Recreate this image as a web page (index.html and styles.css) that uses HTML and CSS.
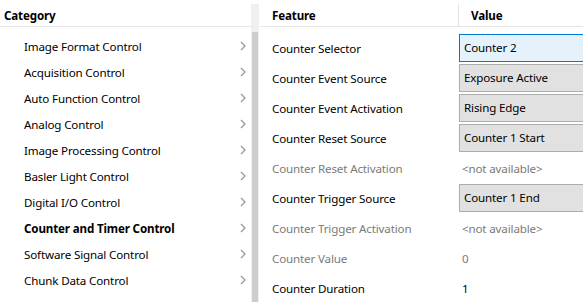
FILE: index.html
```html
<!DOCTYPE html>
<html lang="en">
<head>
    <meta charset="UTF-8">
    <meta name="viewport" content="width=device-width, initial-scale=1.0">
    <title>Camera Features</title>
    <link rel="stylesheet" href="styles.css">
</head>
<body>

    <div class="window">
        <div class="category-pane">
            <div class="pane-header">
                <span class="header-cell">Category</span>
            </div>
            <ul class="category-list">
                <li class="category-item"><span>Image Format Control</span><svg class="chevron" viewBox="0 0 6 10"><polyline points="1,1 5,5 1,9"/></svg></li>
                <li class="category-item"><span>Acquisition Control</span><svg class="chevron" viewBox="0 0 6 10"><polyline points="1,1 5,5 1,9"/></svg></li>
                <li class="category-item"><span>Auto Function Control</span><svg class="chevron" viewBox="0 0 6 10"><polyline points="1,1 5,5 1,9"/></svg></li>
                <li class="category-item"><span>Analog Control</span><svg class="chevron" viewBox="0 0 6 10"><polyline points="1,1 5,5 1,9"/></svg></li>
                <li class="category-item"><span>Image Processing Control</span><svg class="chevron" viewBox="0 0 6 10"><polyline points="1,1 5,5 1,9"/></svg></li>
                <li class="category-item"><span>Basler Light Control</span><svg class="chevron" viewBox="0 0 6 10"><polyline points="1,1 5,5 1,9"/></svg></li>
                <li class="category-item"><span>Digital I/O Control</span><svg class="chevron" viewBox="0 0 6 10"><polyline points="1,1 5,5 1,9"/></svg></li>
                <li class="category-item selected"><span>Counter and Timer Control</span><svg class="chevron" viewBox="0 0 6 10"><polyline points="1,1 5,5 1,9"/></svg></li>
                <li class="category-item"><span>Software Signal Control</span><svg class="chevron" viewBox="0 0 6 10"><polyline points="1,1 5,5 1,9"/></svg></li>
                <li class="category-item"><span>Chunk Data Control</span><svg class="chevron" viewBox="0 0 6 10"><polyline points="1,1 5,5 1,9"/></svg></li>
            </ul>
        </div>

        <div class="scrollbar">
            <div class="scroll-thumb"></div>
        </div>

        <div class="feature-pane">
            <div class="pane-header">
                <span class="header-cell feature-col">Feature</span>
                <span class="header-cell value-col with-divider">Value</span>
            </div>
            <div class="feature-list">
                <div class="feature-row">
                    <span class="feature-col">Counter Selector</span>
                    <span class="value-col"><span class="value-box focused">Counter 2</span></span>
                </div>
                <div class="feature-row">
                    <span class="feature-col">Counter Event Source</span>
                    <span class="value-col"><span class="value-box">Exposure Active</span></span>
                </div>
                <div class="feature-row">
                    <span class="feature-col">Counter Event Activation</span>
                    <span class="value-col"><span class="value-box">Rising Edge</span></span>
                </div>
                <div class="feature-row">
                    <span class="feature-col">Counter Reset Source</span>
                    <span class="value-col"><span class="value-box">Counter 1 Start</span></span>
                </div>
                <div class="feature-row disabled">
                    <span class="feature-col">Counter Reset Activation</span>
                    <span class="value-col"><span class="value-text">&lt;not available&gt;</span></span>
                </div>
                <div class="feature-row">
                    <span class="feature-col">Counter Trigger Source</span>
                    <span class="value-col"><span class="value-box">Counter 1 End</span></span>
                </div>
                <div class="feature-row disabled">
                    <span class="feature-col">Counter Trigger Activation</span>
                    <span class="value-col"><span class="value-text">&lt;not available&gt;</span></span>
                </div>
                <div class="feature-row disabled">
                    <span class="feature-col">Counter Value</span>
                    <span class="value-col"><span class="value-text">0</span></span>
                </div>
                <div class="feature-row">
                    <span class="feature-col">Counter Duration</span>
                    <span class="value-col"><span class="value-text">1</span></span>
                </div>
            </div>
        </div>
    </div>

</body>
</html>
```

FILE: styles.css
```css
body {
    font-family: "Noto Sans", "Open Sans", sans-serif;
    font-size: 11.6px;
    letter-spacing: -0.15px;
    color: #000;
    margin: 0;
    padding: 0;
    background-color: white;
    overflow: hidden;
}

.window {
    display: flex;
    height: 302px;
    width: 583px;
    overflow: hidden;
}

.category-pane {
    width: 251px;
    flex-shrink: 0;
}

.pane-header {
    display: flex;
    height: 26px;
    border-bottom: 1px solid #e5e5e5;
    box-sizing: content-box;
}

.header-cell {
    font-weight: bold;
    line-height: 20px;
    padding-top: 6px;
}

.category-pane .header-cell {
    padding-left: 4px;
}

.category-list {
    list-style: none;
    margin: 0;
    padding: 6px 0 0 0;
}

.category-item {
    display: flex;
    align-items: center;
    justify-content: space-between;
    height: 26px;
    padding-left: 24px;
    padding-right: 5px;
}

.category-item.selected {
    font-weight: bold;
}

.chevron {
    width: 6px;
    height: 10px;
    fill: none;
    stroke: #999;
    stroke-width: 1.3;
}

.scrollbar {
    width: 8px;
    flex-shrink: 0;
    margin-top: 4px;
    padding: 28px 1px 0 1px;
    background-color: #f0f0f0;
    box-sizing: border-box;
}

.scroll-thumb {
    height: 100%;
    background-color: #cdcdcd;
}

.feature-pane {
    flex: 1;
    margin-left: 1px;
}

.feature-col {
    width: 198px;
    flex-shrink: 0;
    padding-left: 12px;
    box-sizing: border-box;
}

.value-col {
    flex: 1;
    white-space: nowrap;
}

.pane-header .value-col {
    padding-left: 12px;
}

.with-divider {
    border-left: 1px solid #e5e5e5;
    margin-top: 4px;
    padding-top: 2px;
}

.feature-list {
    padding-top: 6px;
}

.feature-row {
    display: flex;
    align-items: center;
    height: 30px;
}

.feature-row.disabled {
    color: #7a7a7a;
}

.value-box {
    display: block;
    width: 160px;
    height: 28px;
    line-height: 26px;
    margin-left: 1px;
    padding-left: 4px;
    background-color: #e1e1e1;
    border: 1px solid #adadad;
    box-sizing: border-box;
}

.value-box.focused {
    background-color: #e5f1fb;
    border-color: #0078d7;
}

.value-text {
    padding-left: 4px;
}
```
